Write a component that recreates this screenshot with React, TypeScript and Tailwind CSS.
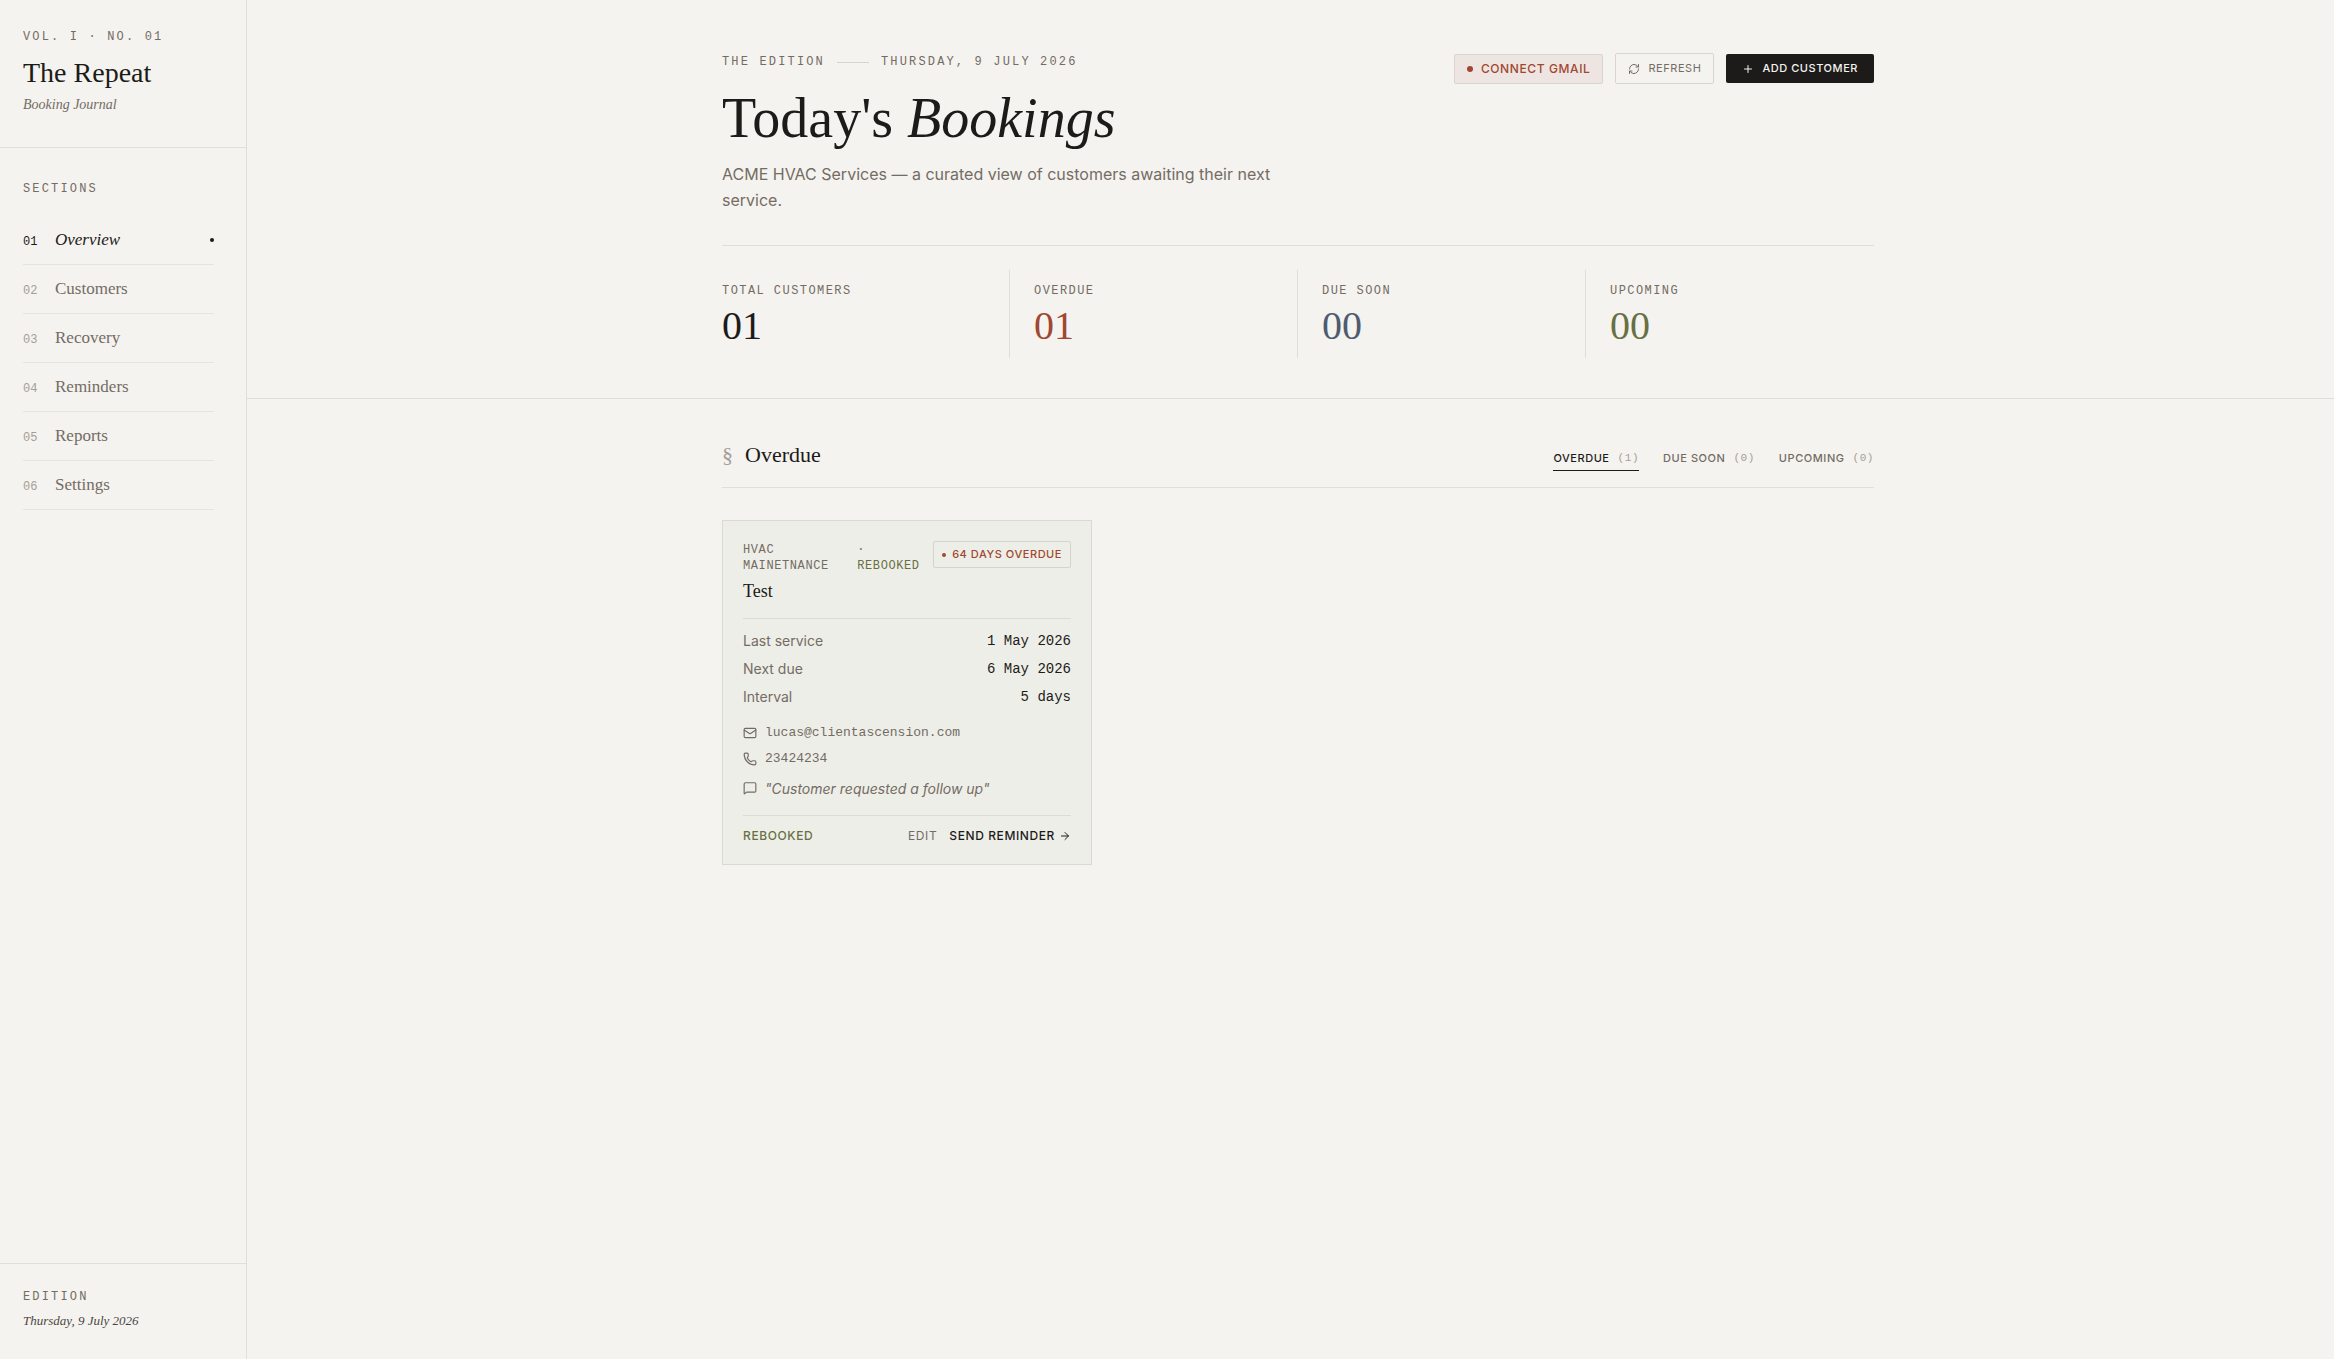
import { useState } from "react";
import {
  ArrowRight,
  Mail,
  MessageSquare,
  Phone,
  Plus,
  RefreshCw,
} from "lucide-react";

const serif = "font-['Liberation_Serif',serif]";
const mono = "font-['Liberation_Mono',monospace]";

const sections = [
  "Overview",
  "Customers",
  "Recovery",
  "Reminders",
  "Reports",
  "Settings",
];

const stats = [
  { label: "Total customers", value: "01", color: "text-[#1c1b19]" },
  { label: "Overdue", value: "01", color: "text-[#a04731]" },
  { label: "Due soon", value: "00", color: "text-[#4f5b70]" },
  { label: "Upcoming", value: "00", color: "text-[#687043]" },
];

const tabs = [
  { label: "Overdue", count: 1 },
  { label: "Due soon", count: 0 },
  { label: "Upcoming", count: 0 },
];

const details = [
  ["Last service", "1 May 2026"],
  ["Next due", "6 May 2026"],
  ["Interval", "5 days"],
];

function Sidebar() {
  return (
    <aside className="flex w-[247px] shrink-0 flex-col border-r border-[#dfded9]">
      <div className="border-b border-[#dfded9] pt-7 pr-8 pb-8 pl-[23px]">
        <p
          className={`${mono} text-xs leading-[18px] tracking-[0.18em] text-[#736c64] uppercase`}
        >
          Vol. I · No. 01
        </p>
        <p className={`${serif} mt-[9px] text-[28px] leading-9`}>The Repeat</p>
        <p
          className={`${serif} mt-1 text-sm leading-5 text-[#736c64] italic`}
        >
          Booking Journal
        </p>
      </div>

      <nav className="pt-8 pr-8 pl-[23px]">
        <p
          className={`${mono} text-xs leading-[18px] tracking-[0.18em] text-[#736c64] uppercase`}
        >
          Sections
        </p>
        <ul className="mt-[18px]">
          {sections.map((name, i) => (
            <li key={name} className="border-b border-[#e6e4df]">
              <a
                href={`#${name.toLowerCase()}`}
                className={`flex h-12 items-baseline ${
                  i === 0 ? "text-[#1c1b19]" : "text-[#736c64]"
                }`}
              >
                <span
                  className={`${mono} w-8 text-xs ${
                    i === 0 ? "" : "text-[#a39f98]"
                  }`}
                >
                  0{i + 1}
                </span>
                <span
                  className={`${serif} text-[17px] leading-12 ${
                    i === 0 ? "italic" : ""
                  }`}
                >
                  {name}
                </span>
                {i === 0 && (
                  <span className="ml-auto size-1 self-center rounded-full bg-[#1c1b19]" />
                )}
              </a>
            </li>
          ))}
        </ul>
      </nav>

      <div className="mt-auto border-t border-[#dfded9] pt-6 pb-7 pl-[23px]">
        <p
          className={`${mono} text-xs leading-[18px] tracking-[0.18em] text-[#736c64] uppercase`}
        >
          Edition
        </p>
        <p
          className={`${serif} mt-[5px] text-[13px] leading-5 text-[#4a4742] italic`}
        >
          Thursday, 9 July 2026
        </p>
      </div>
    </aside>
  );
}

function Header() {
  return (
    <header className="border-b border-[#dfded9] pt-[53px] pb-10 pl-[15px]">
      <div className="mx-auto max-w-6xl">
        <div className="flex items-start justify-between border-b border-[#dfded9] pb-[31px]">
          <div>
            <p
              className={`${mono} flex items-center gap-3 text-xs leading-[18px] tracking-[0.18em] text-[#736c64] uppercase`}
            >
              <span>The edition</span>
              <span className="h-px w-8 bg-[#d5d3cd]" />
              <span>Thursday, 9 July 2026</span>
            </p>
            <h1 className={`${serif} mt-3.5 text-[56px] leading-[66px]`}>
              Today's <em>Bookings</em>
            </h1>
            <p className="mt-2.5 mb-px max-w-xl text-base leading-[26px] text-[#736c64]">
              ACME HVAC Services — a curated view of customers awaiting their
              next service.
            </p>
          </div>

          <div className="flex items-center gap-3 font-medium">
            <button className="flex h-[30px] items-center gap-2 rounded-[2px] border border-[#d8d5cf] bg-[#eee5e2] px-3 text-xs tracking-[0.05em] text-[#a04731] uppercase">
              <span className="size-1.5 rounded-full bg-[#a04731]" />
              Connect Gmail
            </button>
            <button className="flex h-[31px] items-center gap-2 rounded-[2px] border border-[#d8d5cf] px-3 text-[11px] font-normal tracking-[0.05em] text-[#736c64] uppercase">
              <RefreshCw size={12} strokeWidth={2} />
              Refresh
            </button>
            <button className="flex h-[29px] items-center gap-2 rounded-[2px] bg-[#1c1b19] px-4 text-[11px] tracking-[0.05em] text-[#f5f3ef] uppercase">
              <Plus size={12} strokeWidth={2} />
              Add customer
            </button>
          </div>
        </div>

        <dl className="mt-6 grid grid-cols-4">
          {stats.map((stat) => (
            <div
              key={stat.label}
              className="border-r border-[#dfded9] py-3 pl-6 first:pl-0 last:border-r-0"
            >
              <dt
                className={`${mono} text-xs leading-[18px] tracking-[0.12em] text-[#736c64] uppercase`}
              >
                {stat.label}
              </dt>
              <dd
                className={`${serif} mt-1.5 text-[40px] leading-10 ${stat.color}`}
              >
                {stat.value}
              </dd>
            </div>
          ))}
        </dl>
      </div>
    </header>
  );
}

function CustomerCard() {
  return (
    <article className="border border-[#dad9d3] bg-[#eeeee8] p-5">
      <div className="flex items-start justify-between gap-3">
        <div className="min-w-0 flex-1">
          <p
            className={`${mono} flex gap-3 pt-px text-xs leading-4 tracking-[0.05em] text-[#736c64] uppercase`}
          >
            <span>HVAC Mainetnance</span>
            <span className="text-[#687043]">· Rebooked</span>
          </p>
          <h3 className={`${serif} mt-[5px] text-lg leading-6`}>Test</h3>
        </div>
        <span className="flex h-[27px] shrink-0 items-center gap-1.5 rounded-[2px] border border-[#d5d3cd] px-2 text-[11px] font-medium tracking-[0.05em] text-[#a04731] uppercase">
          <span className="size-1 rounded-full bg-[#a04731]" />
          64 days overdue
        </span>
      </div>

      <dl className="mt-[15px] space-y-2 border-t border-[#dcdbd6] pt-3 text-sm leading-5">
        {details.map(([label, value]) => (
          <div key={label} className="flex justify-between">
            <dt className="text-[#736c64]">{label}</dt>
            <dd className={mono}>{value}</dd>
          </div>
        ))}
      </dl>

      <div
        className={`${mono} mt-4 space-y-1.5 text-[13px] leading-5 text-[#736c64]`}
      >
        <p className="flex items-center gap-2">
          <Mail size={14} strokeWidth={2} />
          lucas@clientascension.com
        </p>
        <p className="flex items-center gap-2">
          <Phone size={14} strokeWidth={2} />
          23424234
        </p>
      </div>
      <p className="mt-2.5 flex items-start gap-2 text-sm leading-5 text-[#736c64] italic">
        <MessageSquare size={14} strokeWidth={2} className="mt-0.5" />
        "Customer requested a follow up"
      </p>

      <div className="mt-4 flex items-center gap-3 border-t border-[#dcdbd6] pt-3 text-xs leading-4 tracking-[0.05em]">
        <button className="mr-auto font-medium text-[#687043] uppercase">
          Rebooked
        </button>
        <button className="text-[#736c64] uppercase">Edit</button>
        <button className="flex items-center gap-1 font-medium uppercase">
          Send reminder
          <ArrowRight size={12} strokeWidth={2} />
        </button>
      </div>
    </article>
  );
}

export default function App() {
  const [active, setActive] = useState("Overdue");

  return (
    <div className="flex min-h-screen bg-[#f5f3ef] font-['Inter',sans-serif] text-[#1c1b19]">
      <Sidebar />
      <main className="min-w-0 flex-1">
        <Header />
        <section className="pt-10 pl-[15px]">
          <div className="mx-auto max-w-6xl">
            <div className="flex items-end justify-between border-b border-[#dfded9] pb-4">
              <h2
                className={`${serif} flex items-center gap-3 text-[22px] leading-8`}
              >
                <span className="text-[#a39f98]">§</span>
                {active}
              </h2>
              <div className="flex gap-6">
                {tabs.map((tab) => (
                  <button
                    key={tab.label}
                    onClick={() => setActive(tab.label)}
                    className={`flex gap-2 border-b pb-1 text-[11px] leading-4 font-medium tracking-[0.05em] uppercase ${
                      active === tab.label
                        ? "border-[#1c1b19]"
                        : "border-transparent text-[#736c64]"
                    }`}
                  >
                    {tab.label}
                    <span className={`${mono} font-normal text-[#a39f98]`}>
                      ({tab.count})
                    </span>
                  </button>
                ))}
              </div>
            </div>

            <div className="mt-8 grid grid-cols-3 gap-[21px]">
              <CustomerCard />
            </div>
          </div>
        </section>
      </main>
    </div>
  );
}
